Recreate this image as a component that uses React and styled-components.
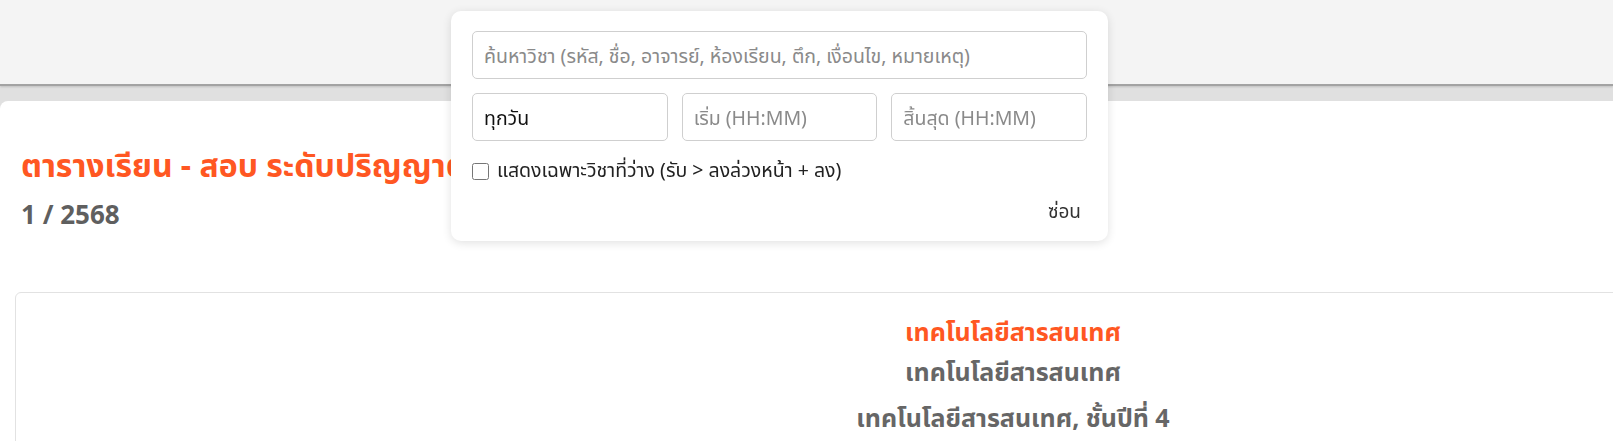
import React, { useState } from "react";
import styled, { createGlobalStyle } from "styled-components";

// ---------------- Global ----------------

const GlobalStyle = createGlobalStyle`
  html, body {
    margin: 0;
    padding: 0;
    overflow: hidden;
    background: #e0e0e0;
    font-family: "Noto Sans", "Noto Sans Thai", "DejaVu Sans", sans-serif;
  }
  * { box-sizing: border-box; }
`;

// ---------------- Styled Components ----------------

const Header = styled.header`
  height: 86px;
  background: #f4f4f4;
  border-bottom: 2px solid #a3a3a3;
  box-shadow: 0 1px 2px rgba(0, 0, 0, 0.15);
`;

const Page = styled.main`
  margin-top: 15px;
  width: 2040px;
  background: #fff;
  border-radius: 8px 0 0 0;
  padding: 41px 15px 40px;
`;

const Title = styled.h1`
  margin: 0 0 0 6px;
  font-size: 32px;
  font-weight: 700;
  color: #ff5722;
  line-height: 45px;
`;

const Term = styled.h2`
  margin: 9px 0 0 6px;
  font-size: 26px;
  font-weight: 700;
  color: #5f5f5f;
  line-height: 36px;
`;

const Faculty = styled.section`
  margin-top: 60px;
  width: 1996px;
  border: 1px solid #e2e2e2;
  border-radius: 6px;
  padding: 18px 20px 40px;
  display: flex;
  flex-direction: column;
  align-items: center;
`;

const FacultyLine = styled.div`
  font-size: 25px;
  font-weight: 700;
  line-height: 40px;
  margin-top: ${(p) => (p.$spaced ? "6px" : "0")};
  color: ${(p) => (p.$accent ? "#ff5722" : "#666")};
`;

const FilterPanel = styled.div`
  position: fixed;
  top: 11px;
  left: 451px;
  width: 657px;
  background: #fff;
  border-radius: 10px;
  box-shadow: 0 2px 10px rgba(0, 0, 0, 0.12);
  padding: 20px 21px 14px;
  display: flex;
  flex-direction: column;
  gap: 14px;
`;

const Field = styled.input`
  width: 100%;
  height: 48px;
  padding: 0 11px;
  border: 1px solid #cfcfcf;
  border-radius: 5px;
  font-family: inherit;
  font-size: 19.5px;
  color: #222;
  background: #fff;
  outline: none;
  &::placeholder {
    color: #8a8a8a;
  }
`;

const DaySelect = styled.select`
  width: 100%;
  height: 48px;
  padding: 0 11px;
  border: 1px solid #cfcfcf;
  border-radius: 5px;
  font-family: inherit;
  font-size: 19.5px;
  color: #111;
  background: #fff;
  appearance: none;
  outline: none;
`;

const Row = styled.div`
  display: grid;
  grid-template-columns: repeat(3, 1fr);
  gap: 14px;
`;

const CheckLabel = styled.label`
  display: flex;
  align-items: center;
  gap: 8px;
  font-size: 19.5px;
  color: #222;
  margin-top: 1px;
`;

const Check = styled.input`
  width: 17px;
  height: 17px;
  margin: 0;
`;

const Footer = styled.div`
  display: flex;
  justify-content: flex-end;
  margin-top: -2px;
`;

const HideBtn = styled.button`
  border: none;
  background: none;
  font-family: inherit;
  font-size: 19px;
  color: #333;
  padding: 0 6px;
  cursor: pointer;
`;

// ---------------- Component ----------------

export default function App() {
  const [onlyFree, setOnlyFree] = useState(false);

  return (
    <>
      <GlobalStyle />
      <Header />
      <Page>
        <Title>ตารางเรียน - สอบ ระดับปริญญาตรี</Title>
        <Term>1 / 2568</Term>

        <Faculty>
          <FacultyLine $accent>เทคโนโลยีสารสนเทศ</FacultyLine>
          <FacultyLine>เทคโนโลยีสารสนเทศ</FacultyLine>
          <FacultyLine $spaced>เทคโนโลยีสารสนเทศ, ชั้นปีที่ 4</FacultyLine>
        </Faculty>
      </Page>

      <FilterPanel>
        <Field placeholder="ค้นหาวิชา (รหัส, ชื่อ, อาจารย์, ห้องเรียน, ตึก, เงื่อนไข, หมายเหตุ)" />
        <Row>
          <DaySelect defaultValue="all">
            <option value="all">ทุกวัน</option>
          </DaySelect>
          <Field placeholder="เริ่ม (HH:MM)" />
          <Field placeholder="สิ้นสุด (HH:MM)" />
        </Row>
        <CheckLabel>
          <Check
            type="checkbox"
            checked={onlyFree}
            onChange={(e) => setOnlyFree(e.target.checked)}
          />
          แสดงเฉพาะวิชาที่ว่าง (รับ &gt; ลงล่วงหน้า + ลง)
        </CheckLabel>
        <Footer>
          <HideBtn>ซ่อน</HideBtn>
        </Footer>
      </FilterPanel>
    </>
  );
}
